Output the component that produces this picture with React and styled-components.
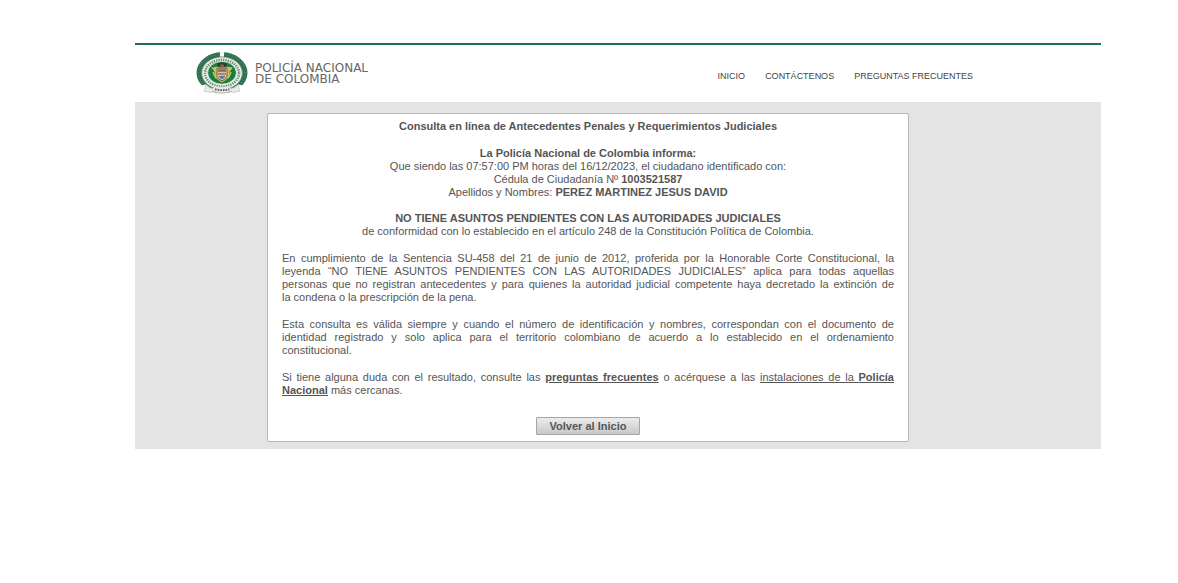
import React from "react";
import styled, { createGlobalStyle } from "styled-components";

const GlobalStyle = createGlobalStyle`
  body {
    margin: 0;
    background: #fff;
    color: #555;
    font-family: "Liberation Sans", Arial, sans-serif;
    font-size: 11px;
    line-height: 13px;
  }
`;

const Page = styled.div`
  padding: 43px 77px 43px 135px;
`;

const Header = styled.header`
  display: flex;
  align-items: center;
  justify-content: space-between;
  box-sizing: border-box;
  min-height: 59px;
  padding: 0 128px 0 61px;
  border-top: 2px solid #1f7048;
`;

const Brand = styled.a`
  display: flex;
  align-items: center;
  gap: 7px;
  color: #666;
  font-family: "DejaVu Sans", Verdana, sans-serif;
  font-size: 12px;
  line-height: 11px;
  text-decoration: none;
`;

const Emblem = styled.svg`
  display: block;
  width: 52px;
  height: 43px;
`;

const Nav = styled.nav`
  display: flex;
  gap: 20px;
  padding-top: 4px;
`;

const NavLink = styled.a`
  color: #444;
  font-size: 9px;
  line-height: 12px;
  text-decoration: none;
  white-space: nowrap;
`;

const Main = styled.main`
  padding: 11px 192px 7px 132px;
  background: #e4e4e4;
`;

const Card = styled.section`
  display: flex;
  flex-direction: column;
  gap: 13px;
  padding: 5px 14px 6px;
  border: 1px solid #b8b8b8;
  border-radius: 2px;
  background: #fff;
`;

const Title = styled.h1`
  margin: 0 0 1px;
  font-size: 11px;
  line-height: 14px;
  text-align: center;
`;

const Notice = styled.p`
  margin: 0;
  text-align: center;
`;

const Paragraph = styled.p`
  margin: 0;
  padding-top: 1px;
  text-align: justify;
`;

const Line = styled.span`
  display: block;
  text-align-last: ${({ $last }) => ($last ? "left" : "justify")};
`;

const TextLink = styled.a`
  color: inherit;
  text-decoration: underline;
`;

const Actions = styled.div`
  display: flex;
  justify-content: center;
  padding-top: 7px;
`;

const Button = styled.button`
  height: 18px;
  padding: 0 13px;
  border: 1px solid #a6a6a6;
  border-radius: 1px;
  background: linear-gradient(#ececec, #c8c8c8);
  color: #555;
  font: bold 11px/14px "Liberation Sans", Arial, sans-serif;
`;

function Crest() {
  return (
    <Emblem viewBox="18 14 156 128" aria-hidden="true">
      <ellipse cx="96" cy="76" rx="69" ry="54" fill="none" stroke="#2f7150" strokeWidth="15" />
      <ellipse
        cx="96"
        cy="76"
        rx="71"
        ry="56"
        fill="none"
        stroke="#5b9176"
        strokeWidth="5"
        strokeDasharray="2 9"
      />
      <path d="M90 14h12v17H90z" fill="#fff" />
      <ellipse cx="96" cy="77" rx="61" ry="49" fill="#eef3ec" stroke="#356b4c" strokeWidth="2" />
      <ellipse
        cx="96"
        cy="77"
        rx="51"
        ry="40"
        fill="none"
        stroke="#6f8c78"
        strokeWidth="8"
        strokeDasharray="4 3"
      />
      <ellipse cx="96" cy="76" rx="43" ry="34" fill="#168044" stroke="#e9efe6" strokeWidth="2" />
      <path d="M81 49q15-8 30 0l-3 9H84z" fill="#343d2e" />
      <path d="M67 62q11-6 21-3h16q11-4 22 3-3 7-7 10l-4 19q-8 9-19 14-12-5-19-14l-4-19z" fill="#d3b957" />
      <path d="M65 60l15 9M127 60l-15 9M69 74l9 18M123 74l-9 18" stroke="#dfc663" strokeWidth="4" />
      <path d="M81 62h30v24q-3 9-15 14-12-5-15-14z" fill="#d9d6c1" stroke="#775d3f" strokeWidth="3" />
      <path d="M84 65h24v8H84z" fill="#7a7060" />
      <path d="M84 76h24v6H84z" fill="#b87862" />
      <path d="M85 85h22q-4 8-11 11-7-3-11-11z" fill="#5b7e97" />
      <path d="M91 51h10v10H91z" fill="#8e6c3b" />
      <path d="M35 114l12-4 13 10-13 9z" fill="#fff" />
      <path d="M157 114l-12-4-13 10 13 9z" fill="#fff" />
      <path d="M47 113q10 10 24 9l1-7q24 7 48 0l1 7q15 1 24-9l5 18-20 4-6-4q-28 11-56 0l-6 4-20-4z" fill="#e9ebe7" stroke="#b9c0b9" strokeWidth="2" />
      <path d="M75 125q21 6 43 0" fill="none" stroke="#606862" strokeWidth="6" strokeDasharray="5 3" />
    </Emblem>
  );
}

export default function App() {
  return (
    <>
      <GlobalStyle />
      <Page>
        <Header>
          <Brand href="#">
            <Crest />
            <span>
              POLICÍA NACIONAL
              <br />
              DE COLOMBIA
            </span>
          </Brand>
          <Nav>
            <NavLink href="#inicio">INICIO</NavLink>
            <NavLink href="#contactenos">CONTÁCTENOS</NavLink>
            <NavLink href="#preguntas">PREGUNTAS FRECUENTES</NavLink>
          </Nav>
        </Header>
        <Main>
          <Card>
            <Title>Consulta en línea de Antecedentes Penales y Requerimientos Judiciales</Title>
            <Notice>
              <b>La Policía Nacional de Colombia informa:</b>
              <br />
              Que siendo las 07:57:00 PM horas del 16/12/2023, el ciudadano identificado con:
              <br />
              Cédula de Ciudadanía Nº <b>1003521587</b>
              <br />
              Apellidos y Nombres: <b>PEREZ MARTINEZ JESUS DAVID</b>
            </Notice>
            <Notice>
              <b>NO TIENE ASUNTOS PENDIENTES CON LAS AUTORIDADES JUDICIALES</b>
              <br />
              de conformidad con lo establecido en el artículo 248 de la Constitución Política de Colombia.
            </Notice>
            <Paragraph>
              <Line>
                En cumplimiento de la Sentencia SU-458 del 21 de junio de 2012, proferida por la Honorable
                Corte Constitucional, la
              </Line>
              <Line>
                leyenda “NO TIENE ASUNTOS PENDIENTES CON LAS AUTORIDADES JUDICIALES” aplica para todas
                aquellas
              </Line>
              <Line>
                personas que no registran antecedentes y para quienes la autoridad judicial competente haya
                decretado la extinción de
              </Line>
              <Line $last>la condena o la prescripción de la pena.</Line>
            </Paragraph>
            <Paragraph>
              <Line>
                Esta consulta es válida siempre y cuando el número de identificación y nombres,
                correspondan con el documento de
              </Line>
              <Line>
                identidad registrado y solo aplica para el territorio colombiano de acuerdo a lo
                establecido en el ordenamiento
              </Line>
              <Line $last>constitucional.</Line>
            </Paragraph>
            <Paragraph>
              Si tiene alguna duda con el resultado, consulte las{" "}
              <TextLink href="#preguntas">
                <b>preguntas frecuentes</b>
              </TextLink>{" "}
              o acérquese a las{" "}
              <TextLink href="#instalaciones">
                instalaciones de la <b>Policía Nacional</b>
              </TextLink>{" "}
              más cercanas.
            </Paragraph>
            <Actions>
              <Button type="button">Volver al Inicio</Button>
            </Actions>
          </Card>
        </Main>
      </Page>
    </>
  );
}
